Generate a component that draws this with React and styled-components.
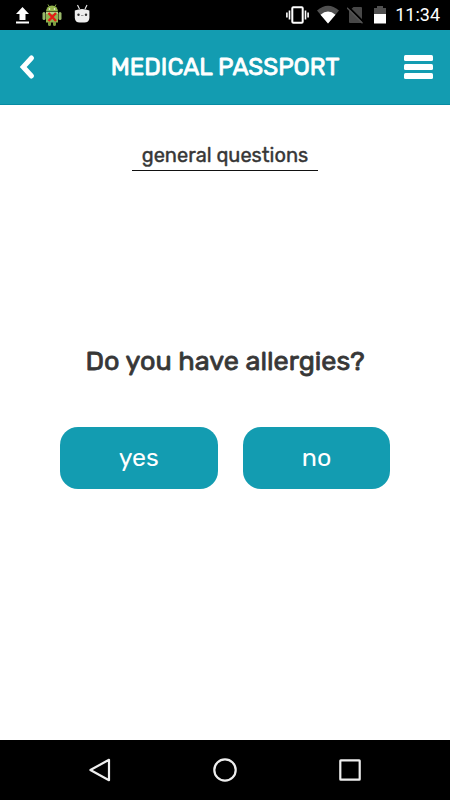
import React from "react";
import styled, { createGlobalStyle } from "styled-components";

const teal = "#139cb1";

const GlobalStyle = createGlobalStyle`
  *, *::before, *::after { box-sizing: border-box; }
  body {
    margin: 0;
    background: #fff;
    color: #373737;
    font-family: Rubik, Roboto, "Liberation Sans", sans-serif;
  }
  button { font-family: inherit; cursor: pointer; }
`;

const Screen = styled.div`
  display: flex;
  flex-direction: column;
  min-height: 100vh;
`;

const StatusBar = styled.div`
  display: flex;
  align-items: center;
  justify-content: space-between;
  height: 30px;
  padding: 0 10px 0 12px;
  background: #000;
`;

const StatusGroup = styled.div`
  display: flex;
  align-items: center;
  gap: ${(p) => p.$gap}px;
`;

const Clock = styled.time`
  color: #fff;
  font: 400 18px/30px Roboto, sans-serif;
`;

const Icon = styled.svg`
  display: block;
  flex: none;
`;

const Header = styled.header`
  display: flex;
  align-items: center;
  justify-content: space-between;
  height: 75px;
  padding: 0 12px;
  background: ${teal};
  border-bottom: 1px solid #078ba3;
`;

const HeaderButton = styled.button`
  display: flex;
  align-items: center;
  justify-content: ${(p) => p.$align};
  width: 40px;
  height: 40px;
  padding: 0 5px;
  border: 0;
  background: none;
  color: #fff;
`;

const Title = styled.h1`
  margin: 0;
  color: #fff;
  font-size: 24px;
  font-weight: 400;
  line-height: 32px;
  -webkit-text-stroke: 0.8px;
`;

const Content = styled.main`
  display: flex;
  flex: 1;
  flex-direction: column;
  align-items: center;
  padding: 36px 16px;
`;

const SectionTitle = styled.h2`
  margin: 0;
  padding: 0 10px;
  border-bottom: 1px solid #111;
  font-size: 20px;
  font-weight: 400;
  line-height: 29px;
  -webkit-text-stroke: 0.4px;
`;

const Question = styled.p`
  margin: 169px 0 45px;
  font-size: 27px;
  font-weight: 400;
  line-height: 42px;
  -webkit-text-stroke: 0.8px;
`;

const Answers = styled.div`
  display: flex;
  gap: 25px;
`;

const AnswerButton = styled.button`
  height: 62px;
  padding: 0 59px;
  border: 0;
  border-radius: 18px;
  background: ${teal};
  color: #fff;
  font-size: 25px;
  line-height: 30px;
`;

const NavBar = styled.nav`
  display: flex;
  justify-content: center;
  height: 60px;
  background: #000;
`;

const NavButton = styled.button`
  display: flex;
  flex: 0 0 125px;
  align-items: center;
  justify-content: center;
  padding: 0;
  border: 0;
  background: none;
  color: #eee;
`;

const UploadIcon = () => (
  <Icon width="20" height="24" viewBox="0 0 20 24" fill="#fff">
    <path d="M10.5 4 17 11h-3.5v6h-6v-6H4zM4 18.5h13v2H4z" />
  </Icon>
);

const AndroidIcon = () => (
  <Icon width="20" height="24" viewBox="0 0 20 24">
    <path d="M6 1.5 7.5 4M14 1.5 12.5 4" stroke="#86a846" strokeWidth="1" />
    <path d="M4 8.5a6 6 0 0 1 12 0z" fill="#94b64d" />
    <path d="M4 9h12v10.5H4z" fill="#8fb44e" />
    <path d="M4 9h12v2H4z" fill="#b9d184" />
    <rect x="0.5" y="9" width="3" height="8" rx="1.5" fill="#98b869" />
    <rect x="16.5" y="9" width="3" height="8" rx="1.5" fill="#98b869" />
    <path d="M6 19h3v2.5a1.5 1.5 0 0 1-3 0zM11 19h3v2.5a1.5 1.5 0 0 1-3 0z" fill="#7c9f42" />
    <circle cx="7.5" cy="6" r="0.8" fill="#fff" />
    <circle cx="12.5" cy="6" r="0.8" fill="#fff" />
    <path d="m6.5 10 7.5 8M14 10l-7.5 8" stroke="#e31b16" strokeWidth="2.4" />
  </Icon>
);

const RobotIcon = () => (
  <Icon width="20" height="24" viewBox="0 0 20 24">
    <path d="M5.5 2 7.5 6M15 2l-2 4" stroke="#eee" strokeWidth="1.1" />
    <path d="M2.8 7.5Q10 4.5 17.4 7.5V15a5 5 0 0 1-5 4.5H7.8a5 5 0 0 1-5-4.5z" fill="#eee" />
    <circle cx="6.5" cy="11.8" r="1.2" fill="#333" />
    <circle cx="14" cy="11.8" r="1.2" fill="#333" />
    <path d="M9 12.5h2.5" stroke="#999" />
  </Icon>
);

const VibrateIcon = () => (
  <Icon width="24" height="20" viewBox="0 0 24 20" fill="none" stroke="#fff" strokeWidth="1.6">
    <rect x="7.3" y="2.3" width="10.4" height="15.4" rx="1" strokeWidth="2" />
    <path d="M1.9 7.5v5M4.5 5.5v9M20.5 5.5v9M23.1 7.5v5" />
  </Icon>
);

const WifiIcon = () => (
  <Icon width="22" height="20" viewBox="0 0 22 20">
    <path d="M0 5.5Q11-4 22 5.5L11 18.5z" fill="#505050" />
    <path d="M3.5 9.7Q11 3.5 18.5 9.7L11 18.5z" fill="#fff" />
  </Icon>
);

const NoSimIcon = () => (
  <Icon width="18" height="20" viewBox="0 0 18 20">
    <path d="M6.5 2H14a1 1 0 0 1 1 1v14a1 1 0 0 1-1 1H3a1 1 0 0 1-1-1V6z" fill="#484848" />
    <path d="m1 1.5 16 16" stroke="#000" strokeWidth="1.8" />
    <path d="m0 2.8 15.5 15.5" stroke="#555" strokeWidth="1.3" />
  </Icon>
);

const BatteryIcon = () => (
  <Icon width="14" height="20" viewBox="0 0 14 20">
    <path d="M4 1h6v2h3v7H1V3h3z" fill="#505050" />
    <path d="M1 9h12v9.5H1z" fill="#fff" />
  </Icon>
);

const BackIcon = () => (
  <Icon width="20" height="28" viewBox="0 0 20 28" fill="none" stroke="currentColor">
    <path d="M14.5 5 6.2 14l8.3 9" strokeWidth="5" strokeLinejoin="miter" strokeLinecap="round" />
  </Icon>
);

const MenuIcon = () => (
  <Icon width="30" height="24" viewBox="0 0 30 24" fill="currentColor">
    <rect x="1" width="29" height="6" rx="1.5" />
    <rect x="1" y="9" width="29" height="6" rx="1.5" />
    <rect x="1" y="18" width="29" height="6" rx="1.5" />
  </Icon>
);

const navItems = [
  { label: "Back", shape: <path d="M21 1.8v20.4L2.4 12z" /> },
  { label: "Home", shape: <circle cx="12" cy="12" r="10.7" /> },
  { label: "Recent apps", shape: <rect x="2.3" y="2.3" width="19.4" height="19.4" rx="0.5" /> },
];

export default function App() {
  return (
    <>
      <GlobalStyle />
      <Screen>
        <StatusBar>
          <StatusGroup $gap={10}>
            <UploadIcon />
            <AndroidIcon />
            <RobotIcon />
          </StatusGroup>
          <StatusGroup $gap={8}>
            <VibrateIcon />
            <WifiIcon />
            <NoSimIcon />
            <BatteryIcon />
            <Clock>11:34</Clock>
          </StatusGroup>
        </StatusBar>
        <Header>
          <HeaderButton type="button" aria-label="Go back" $align="flex-start">
            <BackIcon />
          </HeaderButton>
          <Title>MEDICAL PASSPORT</Title>
          <HeaderButton type="button" aria-label="Menu" $align="center">
            <MenuIcon />
          </HeaderButton>
        </Header>
        <Content>
          <SectionTitle>general questions</SectionTitle>
          <Question id="question">Do you have allergies?</Question>
          <Answers role="group" aria-labelledby="question">
            <AnswerButton type="button">yes</AnswerButton>
            <AnswerButton type="button">no</AnswerButton>
          </Answers>
        </Content>
        <NavBar aria-label="System navigation">
          {navItems.map((item) => (
            <NavButton key={item.label} type="button" aria-label={item.label}>
              <Icon width="24" height="24" viewBox="0 0 24 24" fill="none" stroke="currentColor" strokeWidth="2.2" strokeLinejoin="round">
                {item.shape}
              </Icon>
            </NavButton>
          ))}
        </NavBar>
      </Screen>
    </>
  );
}
